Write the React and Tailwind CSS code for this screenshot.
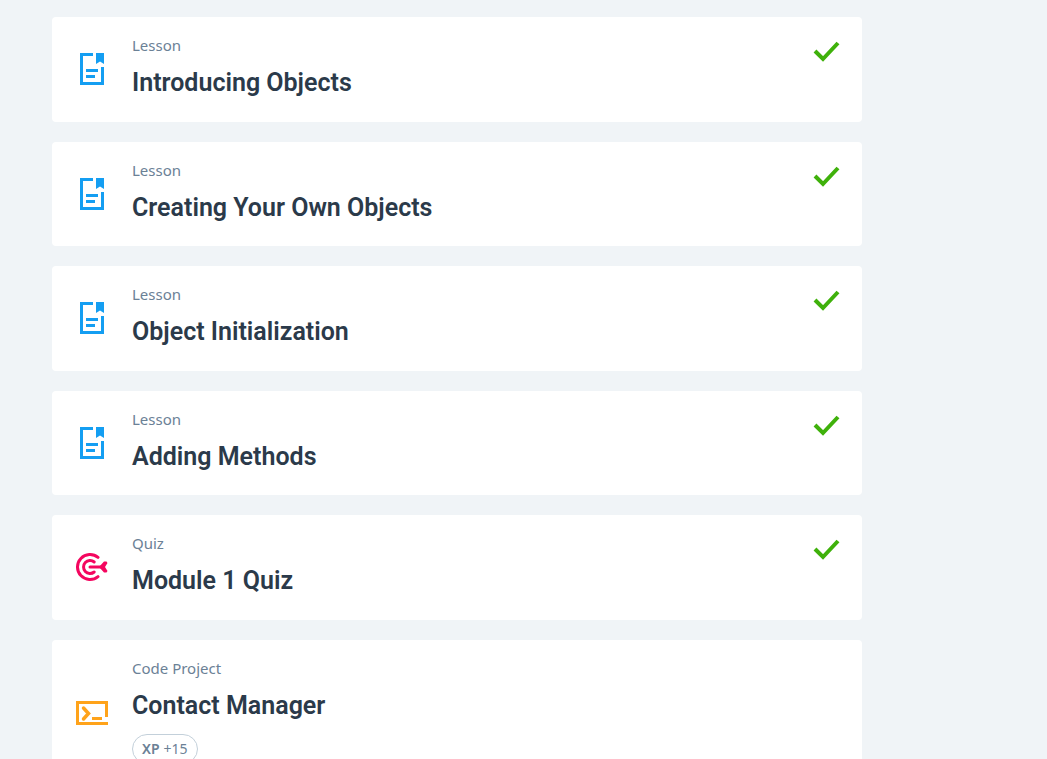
const items = [
  { kind: 'Lesson', title: 'Introducing Objects', done: true },
  { kind: 'Lesson', title: 'Creating Your Own Objects', done: true },
  { kind: 'Lesson', title: 'Object Initialization', done: true },
  { kind: 'Lesson', title: 'Adding Methods', done: true },
  { kind: 'Quiz', title: 'Module 1 Quiz', done: true },
  { kind: 'Code Project', title: 'Contact Manager', xp: 15 },
];

function LessonIcon() {
  return (
    <svg viewBox="0 0 32 32" className="size-8 shrink-0 fill-[#149ef2]" aria-hidden="true">
      <path d="M17 0H4v32h24V14h-3v15H7V3h10z" />
      <path d="M20 0h8v11l-4-2.5-4 2.5z" />
      <path d="M10 16h12v3H10zM10 22h9v3h-9z" />
    </svg>
  );
}

function QuizIcon() {
  return (
    <svg viewBox="0 0 32 32" className="size-8 shrink-0" fill="none" stroke="#f4065f" strokeWidth="3" strokeLinecap="round" aria-hidden="true">
      <path d="M22 6.400A12.500 12.500 0 1 0 22 25.600" />
      <path d="M18.200 11A6.500 6.500 0 1 0 18.200 21" />
      <path d="M14 16h12" />
      <path d="M23 16l5-5.500h2.500l1 1.500-2.500 4 2.500 4-1 1.500H28z" fill="#f4065f" stroke="none" />
    </svg>
  );
}

function ProjectIcon() {
  return (
    <svg viewBox="0 0 32 32" className="size-8 shrink-0" fill="none" stroke="#ffa31a" strokeWidth="3" aria-hidden="true">
      <path d="M32 26.5H1.5v-21h29V20" />
      <path d="M7.500 11l5 5.500-5 5.500" strokeWidth="3.500" strokeLinecap="round" />
      <path d="M16 21.500h10" />
    </svg>
  );
}

function CheckIcon() {
  return (
    <svg viewBox="0 0 32 32" className="size-8 shrink-0" fill="none" stroke="#3fb10b" strokeWidth="4" role="img" aria-label="Completed">
      <path d="M5 14l8 8L28 6" />
    </svg>
  );
}

const icons = { Lesson: LessonIcon, Quiz: QuizIcon, 'Code Project': ProjectIcon };

function StepCard({ kind, title, done, xp }) {
  const Icon = icons[kind];
  return (
    <li className="flex items-center gap-6 rounded-[4px] bg-white pr-5 pl-6">
      <Icon />
      <div className="flex flex-1 flex-col items-start pt-[18px] pb-[22px]">
        <p className="font-['Noto_Sans',sans-serif] text-[15px] leading-5 text-[#6b8196]">{kind}</p>
        <h2 className="mt-3 text-[25px] leading-[1.3] font-semibold text-[#2b3a4a]">{title}</h2>
        {xp && (
          <p className="mt-3 flex h-[30px] items-center gap-1 rounded-full border border-[#c3d0da] px-[9px] font-['Noto_Sans',sans-serif] text-sm text-[#6b8196]">
            <span className="font-semibold">XP</span> +{xp}
          </p>
        )}
      </div>
      {done && <div className="self-start pt-5"><CheckIcon /></div>}
    </li>
  );
}

export default function App() {
  return (
    <main className="min-h-screen bg-[#f0f4f7] py-[17px] pr-6 pl-[52px] font-[Roboto,sans-serif]">
      <ul className="flex max-w-[810px] flex-col gap-5">
        {items.map((item) => (
          <StepCard key={item.title} {...item} />
        ))}
      </ul>
    </main>
  );
}
